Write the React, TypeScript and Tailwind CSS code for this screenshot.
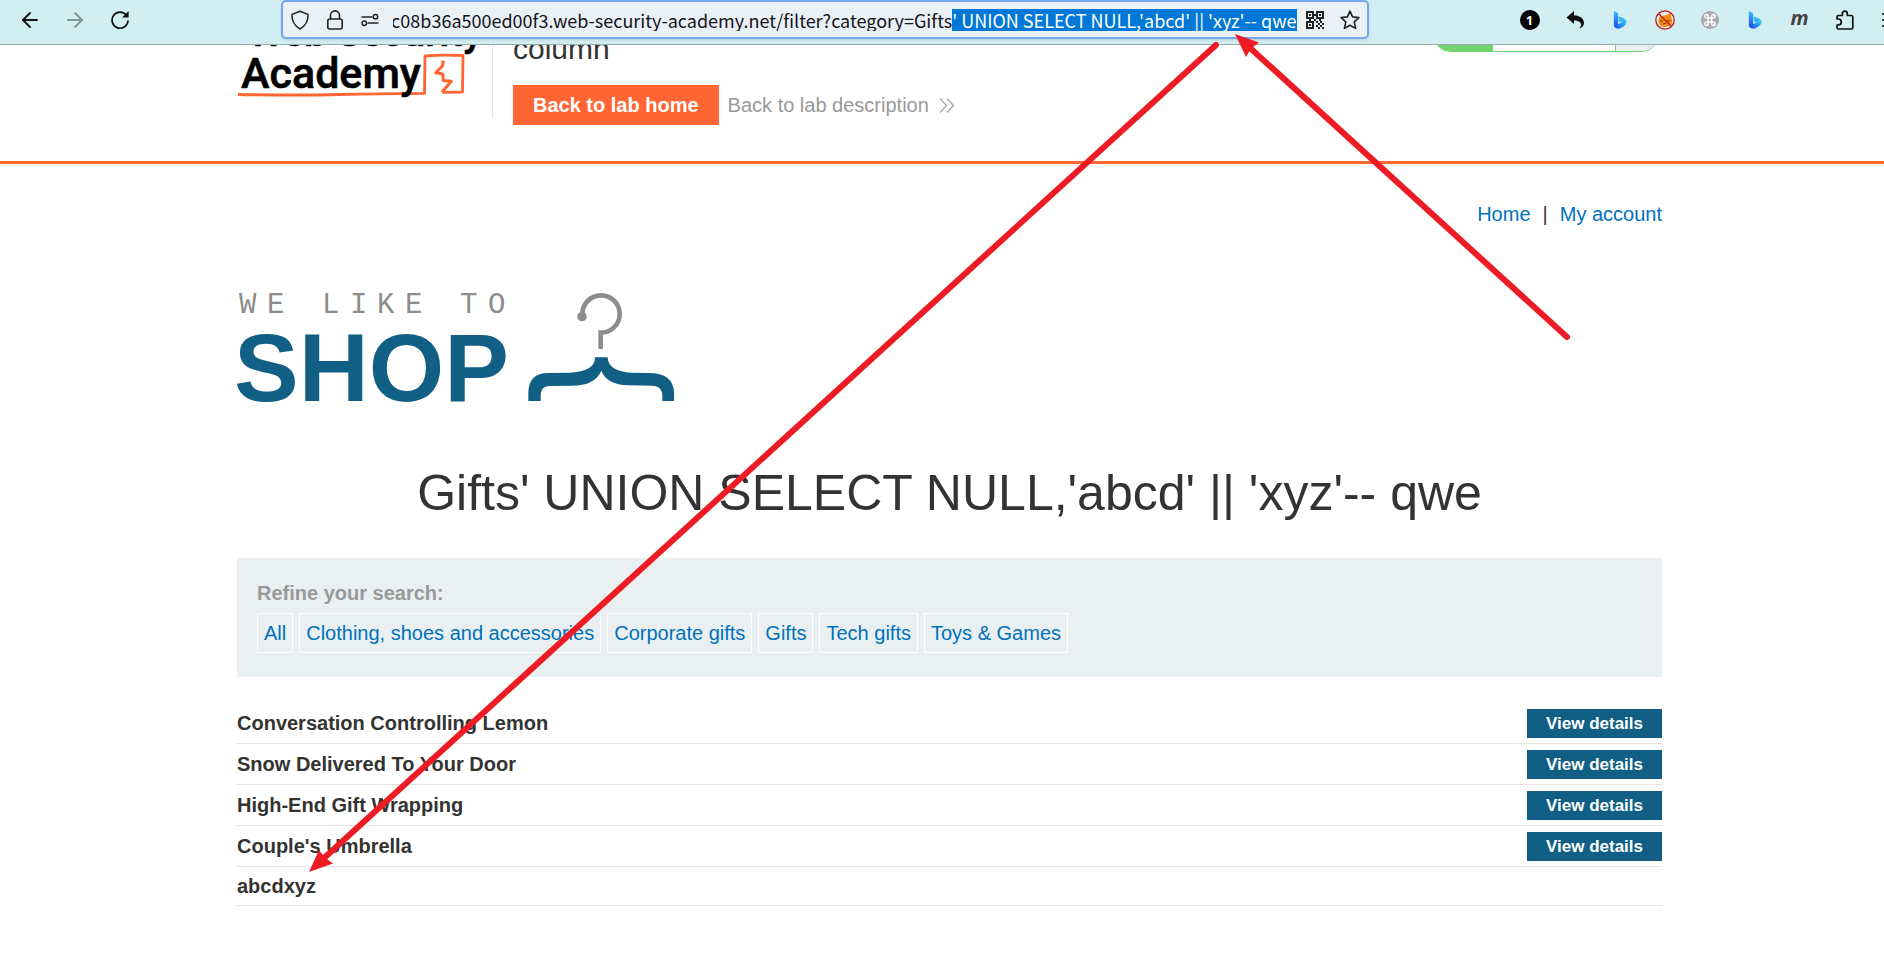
import { useEffect, useRef } from "react";
import { ArrowLeft, ArrowRight } from "lucide-react";

const URL_HEAD = "bc08b36a500ed00f3.web-security-academy.net/filter?category=Gifts";
const PAYLOAD = "' UNION SELECT NULL,'abcd' || 'xyz'-- qwe";

const categories = ["All", "Clothing, shoes and accessories", "Corporate gifts", "Gifts", "Tech gifts", "Toys & Games"];

const products = [
  { name: "Conversation Controlling Lemon", details: true },
  { name: "Snow Delivered To Your Door", details: true },
  { name: "High-End Gift Wrapping", details: true },
  { name: "Couple's Umbrella", details: true },
  { name: "abcdxyz", details: false },
];

function ReloadIcon() {
  return (
    <svg className="size-5" viewBox="0 0 20 20" fill="none" stroke="#111" strokeWidth="1.7">
      <path d="M16.5 5.5A8 8 0 1 0 18 11" strokeLinecap="round" />
      <path d="M18.6 1v6.5h-6.5z" fill="#111" stroke="none" />
    </svg>
  );
}

function ShieldIcon() {
  return (
    <svg className="size-5" viewBox="0 0 20 20" fill="none" stroke="#222" strokeWidth="1.5" strokeLinejoin="round">
      <path d="M10 1.2 18 4.4q.5 9.6-8 14.6Q1.500 14 2 4.400z" />
    </svg>
  );
}

function LockIcon() {
  return (
    <svg className="size-5" viewBox="0 0 20 20" fill="none" stroke="#222" strokeWidth="1.6">
      <rect x="2.800" y="9" width="14.400" height="10" rx="2" />
      <path d="M5.500 9V5.400a4.500 4.500 0 0 1 9 0V9" />
    </svg>
  );
}

function PermissionsIcon() {
  return (
    <svg className="size-5" viewBox="0 0 20 20" fill="none" stroke="#222" strokeWidth="1.500">
      <path d="M2 7h10M8 13h10" strokeLinecap="round" />
      <circle cx="15.500" cy="6.800" r="2.200" />
      <circle cx="4.300" cy="13.200" r="2.200" />
    </svg>
  );
}

function QrIcon() {
  return (
    <svg className="size-[18px]" viewBox="0 0 18 18" fill="#222">
      <path fillRule="evenodd" d="M0 0h8v8H0zM2 2v4h4V2zM10 0h8v8h-8zM12 2v4h4V2zM0 10h8v8H0zM2 12v4h4v-4z" />
      <path d="M3 3h2v2H3zM13 3h2v2h-2zM3 13h2v2H3zM8 3h2v2H8zM8 8h2v2H8zM3 8h2v2H3zM13 8h2v2h-2zM10 10h2v2h-2zM14 10h2v2h-2zM12 12h2v2h-2zM16 12h2v2h-2zM10 14h2v2h-2zM14 14h2v2h-2zM12 16h2v2h-2zM16 16h2v2h-2z" />
    </svg>
  );
}

function StarIcon() {
  return (
    <svg className="size-5" viewBox="0 0 20 20" fill="none" stroke="#222" strokeWidth="1.600" strokeLinejoin="round">
      <path d="M10 1.200l2.600 5.700 6.300.7-4.700 4.200 1.400 6.600L10 15.200l-5.600 3.200 1.400-6.600L1.100 7.600l6.300-.7z" />
    </svg>
  );
}

function UndoIcon() {
  return (
    <svg className="size-5" viewBox="0 0 20 20" fill="#111">
      <path d="M1.500 7.500 9 1v4.200c6 .2 10 3.300 10 8 0 2.300-1.800 4.600-5 5.300 1.500-1.200 2-2.500 2-3.700 0-2.600-2.500-4.200-7-4.300V14z" />
    </svg>
  );
}

function BingIcon() {
  return (
    <svg className="size-5" viewBox="0 0 20 20">
      <defs>
        <linearGradient id="bing-stem" x1="0" y1="0" x2="0" y2="1">
          <stop offset="0" stopColor="#3cc2ff" />
          <stop offset="1" stopColor="#1a48f0" />
        </linearGradient>
        <linearGradient id="bing-bowl" x1="0" y1="1" x2="1" y2="0">
          <stop offset="0" stopColor="#1b50ee" />
          <stop offset="1" stopColor="#2fd0f5" />
        </linearGradient>
      </defs>
      <path d="M4.500 14.500q0 4 3.500 4.200 2 0 4-1.500 4.500-2 4.500-6 0-.5-.2-1L8.500 14z" fill="url(#bing-bowl)" />
      <path d="M8.500 6.500q6 1.500 7.600 4.300.4 1.500-.9 2.700L9.500 12z" fill="#35b9f5" />
      <path d="M3.800 1 7 2.500q1.200.6 1.200 2V14q-.2 3-2 4-2.400-.3-2.400-3z" fill="url(#bing-stem)" />
    </svg>
  );
}

function BlockedFoxIcon() {
  return (
    <svg className="size-5" viewBox="0 0 20 20">
      <circle cx="10" cy="10" r="9.300" fill="#e8f0ee" />
      <path d="M4 7.500q2-2.500 6-2l6-2.500v3.500q2 4 .5 7.500-3 3.500-8 3-4.500-1-5-5.500z" fill="#f08a11" />
      <path d="M5 10.500l3 .8M11 11.500l4-1M8 14l3-.6" stroke="#6f400c" strokeWidth="1" />
      <circle cx="10" cy="10" r="9.200" fill="none" stroke="#c5141b" strokeWidth="1.300" />
      <path d="M3.500 3.500l13 13" stroke="#c5141b" strokeWidth="1.300" />
    </svg>
  );
}

function CommandIcon() {
  return (
    <svg className="size-5" viewBox="0 0 20 20">
      <circle cx="10" cy="10" r="9" fill="#a9a9a9" />
      <path
        d="M8 8H6.700A1.700 1.700 0 1 1 8.300 6.300v7.400A1.700 1.700 0 1 1 6.700 12h6.600a1.700 1.700 0 1 1-1.600 1.700V6.300A1.700 1.700 0 1 1 13.300 8z"
        fill="none"
        stroke="#fff"
        strokeWidth="1.500"
      />
    </svg>
  );
}

function PuzzleIcon() {
  return (
    <svg className="size-5" viewBox="0 0 20 20" fill="none" stroke="#111" strokeWidth="1.700" strokeLinejoin="round">
      <path d="M2 9V7q0-1.500 1.500-1.500h3.800V3.700a2.500 2.500 0 0 1 5 0v1.800h4q1.500 0 1.500 1.500v10.500q0 1.500-1.500 1.500H3.500Q2 19 2 17.500V15h1.300a3 3 0 0 0 0-6z" />
    </svg>
  );
}

function ExtensionButton({ label, children }: { label: string; children: React.ReactNode }) {
  return (
    <button type="button" aria-label={label} className="flex size-[45px] shrink-0 items-center justify-center">
      {children}
    </button>
  );
}

function BrowserToolbar() {
  const address = useRef<HTMLInputElement>(null);

  useEffect(() => {
    const input = address.current;
    if (!input) return;
    input.focus({ preventScroll: true });
    input.setSelectionRange(URL_HEAD.length, URL_HEAD.length + PAYLOAD.length);
    input.scrollLeft = input.scrollWidth;
  }, []);

  return (
    <div className="flex h-[45px] overflow-hidden border-b border-[#9aabad] bg-[#d1eef2]">
      <div className="flex h-[39px] w-[281px] shrink-0 items-center pl-[18px]">
        <button type="button" aria-label="Back" className="w-[45px]">
          <ArrowLeft className="size-6 text-[#111]" strokeWidth={1.8} />
        </button>
        <button type="button" aria-label="Forward" className="w-[45px]">
          <ArrowRight className="size-6 text-[#839497]" strokeWidth={1.8} />
        </button>
        <button type="button" aria-label="Reload" className="pl-[2px]">
          <ReloadIcon />
        </button>
      </div>
      <div className="flex h-[39px] min-w-0 flex-1 items-center rounded-[5px] border-2 border-[#77a6ea] bg-[#e9f0f6] pl-[7px] shadow-sm">
        <div className="flex w-[103px] shrink-0 gap-[15px]">
          <ShieldIcon />
          <LockIcon />
          <PermissionsIcon />
        </div>
        <input
          ref={address}
          aria-label="Address"
          spellCheck={false}
          defaultValue={URL_HEAD + PAYLOAD}
          className="h-[22px] min-w-0 flex-1 bg-transparent text-right font-['Noto_Sans_CJK_SC','Noto_Sans',sans-serif] text-[18px] leading-[22px] text-[#15141a] caret-transparent outline-none selection:bg-[#0078d7] selection:text-white"
        />
        <div className="flex w-[70px] shrink-0 items-center gap-4 pl-[9px]">
          <QrIcon />
          <StarIcon />
        </div>
      </div>
      <div className="flex h-[39px] w-[515px] shrink-0 items-center overflow-hidden pl-[138px]">
        <ExtensionButton label="Notifications">
          <span className="flex size-5 items-center justify-center rounded-full bg-black font-['Open_Sans',sans-serif] text-[13px] font-bold text-white">
            1
          </span>
        </ExtensionButton>
        <ExtensionButton label="Undo"><UndoIcon /></ExtensionButton>
        <ExtensionButton label="Bing"><BingIcon /></ExtensionButton>
        <ExtensionButton label="Blocker"><BlockedFoxIcon /></ExtensionButton>
        <ExtensionButton label="Shortcuts"><CommandIcon /></ExtensionButton>
        <ExtensionButton label="Bing chat"><BingIcon /></ExtensionButton>
        <ExtensionButton label="Markdown">
          <span className="pb-1 font-['Open_Sans',sans-serif] text-[20px] leading-5 font-bold text-[#444] italic">m</span>
        </ExtensionButton>
        <ExtensionButton label="Extensions"><PuzzleIcon /></ExtensionButton>
        <button type="button" aria-label="Menu" className="shrink-0 pl-[15px]">
          <svg className="size-5" viewBox="0 0 20 20" stroke="#111" strokeWidth="1.700">
            <path d="M0 4h20M0 10h20M0 16h20" />
          </svg>
        </button>
      </div>
    </div>
  );
}

function AcademyLogo() {
  return (
    <svg className="h-[73px] w-[256px] shrink-0 border-r border-[#e4e4e4]" viewBox="237 45 255 73" role="img" aria-label="Web Security Academy">
      <g fill="none" stroke="#ff6633" strokeLinejoin="round">
        <path d="M238 94.500Q300 95.500 340 94.500T424.500 93.300L425 56Q440 54.500 463 55.500L462.500 92Q452 92 442 92.300" strokeWidth="2.800" />
        <path d="M443.300 60.500L442.500 66 435.700 72.700 442.700 74 443.300 80.500 451.300 81.300 442 92" strokeWidth="3" />
      </g>
      <g fontFamily="'Roboto',sans-serif" fontWeight="500" stroke="#000" strokeWidth="0.600">
        <text x="248" y="46" fontSize="40">Web Security</text>
        <text x="241" y="88" fontSize="43">Academy</text>
      </g>
    </svg>
  );
}

function LabHeader() {
  return (
    <header className="h-[119px] overflow-hidden border-b-3 border-[#ff6633] pr-[222px] pl-[237px]">
      <div className="flex">
        <AcademyLogo />
        <div className="-mt-[14px] flex-1">
          <div className="flex">
            <h2 className="flex-1 pl-5 text-[30px] leading-9 text-[#333332]">column</h2>
            <div className="-mt-[19px] mr-1 flex h-10 w-[224px] overflow-hidden rounded-[16px] border border-[#70d46e] bg-white">
              <span className="w-[58px] bg-[#70d46e]" />
              <span className="flex-1" />
              <span className="w-[42px] border-l border-[#70d46e] bg-[#eaf0f2]" />
            </div>
          </div>
          <div className="mt-[18px] flex items-center gap-[9px] pl-5">
            <a href="#home" className="bg-[#ff6633] px-5 text-[20px] leading-10 font-bold text-white">Back to lab home</a>
            <a href="#description" className="flex items-center gap-[10px] text-[20px] leading-10 text-[#999]">
              Back to lab description
              <svg className="h-[15px] w-4" viewBox="0 0 16 15" fill="none" stroke="#a3a3a3" strokeWidth="1.200">
                <path d="M1 .5l6.500 7L1 14.500M8 .5l6.500 7-6.500 7" />
              </svg>
            </a>
          </div>
        </div>
      </div>
    </header>
  );
}

function ShopLogo() {
  return (
    <svg className="mt-[57px] block h-[125px] w-[440px]" viewBox="237 285 440 125" role="img" aria-label="We like to shop">
      <text x="239 267 322 350 377 405 460 488" y="313" fontFamily="'Liberation Mono',monospace" fontSize="29" fill="#8c8c8c">
        WELIKETO
      </text>
      <text x="234" y="401" fontFamily="'Liberation Sans',sans-serif" fontWeight="700" fontSize="97" fill="#115f84">
        SHOP
      </text>
      <g transform="translate(220 270) scale(.33333)">
        <path d="M1087 132A56 56 0 1 1 1142 188V237" fill="none" stroke="#8c8c8c" strokeWidth="14" />
        <circle cx="1086" cy="140" r="14" fill="#8c8c8c" />
        <path
          d="M925 393V370Q925 309 985 309L1048 308Q1125 306 1125 262H1163Q1165 306 1235 308L1285 309Q1362 309 1362 370V393H1327V378Q1327 348 1298 347L1225 346Q1160 344 1144 302Q1125 347 1055 347L985 348Q962 350 962 378V393Z"
          fill="#115f84"
        />
      </g>
    </svg>
  );
}

function Annotations() {
  return (
    <svg className="pointer-events-none absolute top-0 left-0 h-[961px] w-[1884px]" viewBox="0 0 1884 961" aria-hidden="true">
      <g fill="#ed1c24" stroke="none">
        <path d="M309 872L319 850 325 857.500 333 863.500z" />
        <path d="M1235 34L1259 42.500 1251 48.500 1246 57z" />
      </g>
      <g stroke="#ed1c24" strokeWidth="6" strokeLinecap="round">
        <path d="M1216 45L323 859" />
        <path d="M1567 337L1249 47" />
      </g>
    </svg>
  );
}

export default function App() {
  return (
    <div className="relative min-h-screen overflow-hidden bg-white font-['Liberation_Sans',Arial,sans-serif] text-[20px] leading-7 text-[#333332]">
      <BrowserToolbar />
      <LabHeader />
      <main className="pr-[222px] pl-[237px]">
        <nav className="flex justify-end gap-3 pt-9">
          <a href="#home" className="text-[#0071bc]">Home</a>
          <span>|</span>
          <a href="#account" className="text-[#0071bc]">My account</a>
        </nav>
        <ShopLogo />
        <h1 className="mt-[53px] text-center text-[50px] leading-[60px]">Gifts{PAYLOAD}</h1>
        <section className="mt-[35px] bg-[#eaf0f2] px-5 pt-[21px] pb-6">
          <h3 className="font-bold text-[#999]">Refine your search:</h3>
          <div className="mt-[6px] flex gap-[6px]">
            {categories.map((name) => (
              <a key={name} href="#filter" className="border border-white px-[6px] leading-[38px] text-[#0071bc]">
                {name}
              </a>
            ))}
          </div>
        </section>
        <table className="mt-[26px] w-full border-separate border-spacing-0">
          <tbody>
            {products.map((product) => (
              <tr key={product.name}>
                <th scope="row" className="h-[39px] border-b border-[#e4e4e4] p-0 text-left font-bold">{product.name}</th>
                <td className="border-b border-[#e4e4e4] p-0">
                  {product.details && (
                    <a href="#product" className="my-[6px] mb-[5px] ml-auto block w-[135px] bg-[#115f84] text-center text-[17px] leading-[29px] font-bold text-white">
                      View details
                    </a>
                  )}
                </td>
              </tr>
            ))}
          </tbody>
        </table>
      </main>
      <Annotations />
    </div>
  );
}
